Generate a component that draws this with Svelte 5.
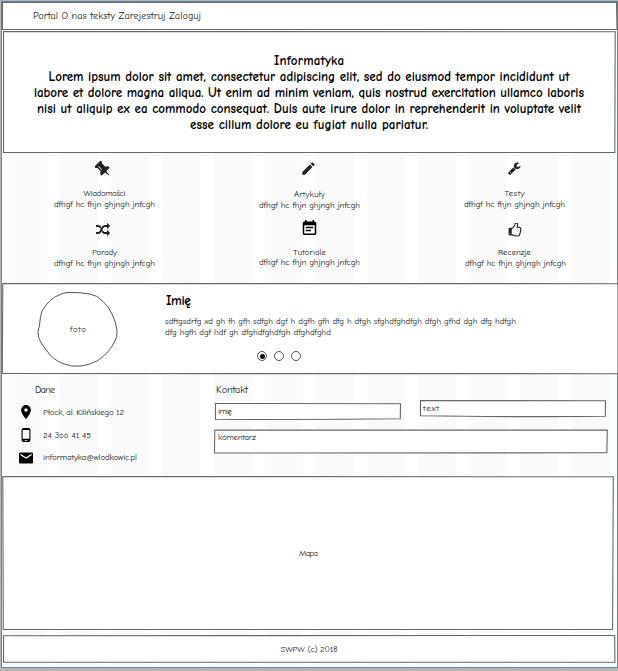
<script>
  // Spreads the letters of a line so that it takes the given width.
  function fit(node, width) {
    const natural = node.getBoundingClientRect().width;
    const gap = (width - natural) / Math.max(1, node.textContent.length - 1);
    node.style.letterSpacing = `${gap}px`;
    node.style.marginRight = `${-gap}px`;
  }

  const heroLines = [
    ['Informatyka', 70],
    ['Lorem ipsum dolor sit amet, consectetur adipiscing elit, sed do eiusmod tempor incididunt ut', 521],
    ['labore et dolore magna aliqua. Ut enim ad minim veniam, quis nostrud exercitation ullamco laboris', 550],
    ['nisi ut aliquip ex ea commodo consequat. Duis aute irure dolor in reprehenderit in voluptate velit', 544],
    ['esse cillum dolore eu fugiat nulla pariatur.', 238]
  ];

  const blurb = 'dfhgf hc fhjn ghjngh jnfcgh';
  const services = [
    { icon: 'pin', title: 'Wiadomości', w: 42, cls: 'a' },
    { icon: 'pencil', title: 'Artykuły', w: 31, cls: 'b' },
    { icon: 'wrench', title: 'Testy', w: 20, cls: 'c' },
    { icon: 'random', title: 'Porady', w: 25, cls: 'd' },
    { icon: 'event', title: 'Tutoriale', w: 33, cls: 'e' },
    { icon: 'thumb', title: 'Recenzje', w: 33, cls: 'f' }
  ];

  const contacts = [
    { icon: 'place', text: 'Płock, al. Kilińskiego 12', w: 81 },
    { icon: 'phone', text: '24 366 41 45', w: 48 },
    { icon: 'mail', text: 'informatyka@wlodkowic.pl', w: 94 }
  ];

  const icons = {
    pin: { box: '0 0 1792 1792', turn: 'rotate(-45 896 896)', d: 'M800 864v-448q0-14-9-23t-23-9-23 9-9 23v448q0 14 9 23t23 9 23-9 9-23zm672 352q0 26-19 45t-45 19h-429l-51 483q-2 12-10.500 20.500t-20.500 8.500h-1q-27 0-32-27l-76-485h-404q-26 0-45-19t-19-45q0-123 78.500-221.500t177.500-98.500v-512q-52 0-90-38t-38-90 38-90 90-38h640q52 0 90 38t38 90-38 90-90 38v512q99 0 177.500 98.500t78.500 221.500z' },
    pencil: { box: '2.500 2.500 19 19', d: 'M3 17.250V21h3.750L17.810 9.940l-3.750-3.750L3 17.250zM20.710 7.040a1 1 0 0 0 0-1.410l-2.340-2.340a1 1 0 0 0-1.410 0l-1.830 1.830 3.750 3.750 1.830-1.830z' },
    wrench: { box: '64 64 1728 1728', d: 'M448 1472q0-26-19-45t-45-19-45 19-19 45 19 45 45 19 45-19 19-45zm644-420l-682 682q-37 37-90 37-52 0-91-37l-106-108q-38-36-38-90 0-53 38-91l681-681q39 98 114.500 173.500t173.500 114.500zm634-435q0 39-23 106-47 134-164.500 217.500t-258.500 83.500q-185 0-316.500-131.500t-131.500-316.500 131.500-316.500 316.500-131.500q58 0 121.500 16.500t107.500 46.500q16 11 16 28t-16 28l-293 169v224l193 107q5-3 79-48.500t135.500-81 70.500-35.500q15 0 23.500 10t8.500 25z' },
    random: { box: '0 0 1792 1792', d: 'M666 481q-60 92-137 273-22-45-37-72.500t-40.500-63.500-51-56.500-63-35-81.500-14.500h-224q-14 0-23-9t-9-23v-192q0-14 9-23t23-9h224q250 0 410 225zm1126 799q0 14-9 23l-320 320q-9 9-23 9-13 0-22.500-9.500t-9.500-22.500v-192q-32 0-85 .5t-81 1-73-1-71-5-64-10.500-63-18.500-58-28.500-59-40-55-53.500-56-69.500q59-93 136-273 22 45 37 72.500t40.500 63.500 51 56.500 63 35 81.500 14.500h256v-192q0-14 9-23t23-9q12 0 24 10l319 319q9 9 9 23zm0-896q0 14-9 23l-320 320q-9 9-23 9-13 0-22.500-9.500t-9.500-22.500v-192h-256q-48 0-87 15t-69 45-51 61.500-45 77.500q-32 62-78 171-29 66-49.500 111t-54 105-64 100-74 83-90 68.500-106.500 42-128 16.500h-224q-14 0-23-9t-9-23v-192q0-14 9-23t23-9h224q48 0 87-15t69-45 51-61.500 45-77.500q32-62 78-171 29-66 49.500-111t54-105 64-100 74-83 90-68.500 106.500-42 128-16.500h256v-192q0-14 9-23t23-9q12 0 24 10l319 319q9 9 9 23z' },
    event: { box: '2 1 20 20', d: 'M17 10H7v2h10v-2zm2-7h-1V1h-2v2H8V1H6v2H5a2 2 0 0 0-2 2v14a2 2 0 0 0 2 2h14a2 2 0 0 0 2-2V5a2 2 0 0 0-2-2zm0 16H5V8h14v11zm-5-5H7v2h7v-2z' },
    thumb: { box: '64 64 1664 1664', d: 'M384 1344q0-26-19-45t-45-19-45 19-19 45 19 45 45 19 45-19 19-45zm1152-576q0-51-39-89.500t-89-38.500h-352q0-58 48-159.500t48-160.500q0-98-32-145t-128-47q-26 26-38 85t-30.500 125.500-59.500 109.500q-22 23-77 91-4 5-23 30t-31.500 41-34.500 42.500-40 44-38.500 35.500-40 27-35.500 9h-32v640h32q13 0 31.500 3t33 6.500 38 11 35 11.500 35.500 12.500 29 10.500q211 73 342 73h121q192 0 192-167 0-26-5-56 30-16 47.500-52.500t17.500-73.500-18-69q53-50 53-119 0-25-10-55.500t-25-47.500q32-1 53.500-47t21.500-81zm128-1q0 89-49 163 9 33 9 69 0 77-38 144 3 21 3 43 0 101-60 178 1 139-85 219.500t-227 80.500h-129q-96 0-189.500-22.500t-216.500-65.500q-116-40-138-40h-288q-53 0-90.500-37.500t-37.500-90.500v-640q0-53 37.500-90.500t90.500-37.500h274q36-24 137-155 58-75 107-128 24-25 35.500-85.500t30.500-126.500 62-108q39-37 90-37 84 0 151 32.500t102 101.500 35 186q0 93-48 192h176q104 0 180 76t76 179z' },
    place: { box: '2 2 20 20', d: 'M12 2a7 7 0 0 0-7 7c0 5.250 7 13 7 13s7-7.750 7-13a7 7 0 0 0-7-7zm0 9.500a2.500 2.500 0 1 1 0-5 2.500 2.500 0 0 1 0 5z' },
    phone: { box: '1 1 22 22', d: 'M16 1H8a3 3 0 0 0-3 3v16a3 3 0 0 0 3 3h8a3 3 0 0 0 3-3V4a3 3 0 0 0-3-3zm-2 20h-4v-1h4v1zm3.250-3H6.750V4h10.500v14z' },
    mail: { box: '2 2 20 20', d: 'M20 4H4a2 2 0 0 0-2 2v12a2 2 0 0 0 2 2h16a2 2 0 0 0 2-2V6a2 2 0 0 0-2-2zm0 4l-8 5-8-5V6l8 5 8-5v2z' }
  };
</script>

{#snippet line(text, width)}<span class="line" use:fit={width}>{text}</span>{/snippet}

{#snippet icon(name)}
  <svg class="icon {name}" viewBox={icons[name].box} aria-hidden="true">
    <path d={icons[name].d} transform={icons[name].turn} fill="currentColor" />
  </svg>
{/snippet}

{#snippet outline(d)}
  <svg class="outline" aria-hidden="true"><path {d} /></svg>
{/snippet}

<div class="desk">
  <div class="page">
    <nav class="top">
      {@render outline('M.5 .5L614.500 .5L615 27.500L.5 27.500Z')}
      {@render line('Portal O nas teksty Zarejestruj Zaloguj', 168)}
    </nav>

    <header class="hero">
      {@render outline('M1.500 .5L613.200 .8L612.800 121.500L1.500 121.500Z')}
      {#each heroLines as [text, width]}
        <div>{@render line(text, width)}</div>
      {/each}
    </header>

    <section class="services">
      {#each services as s}
        <article class={s.cls}>
          <div class="slot">{@render icon(s.icon)}</div>
          <div class="name">{@render line(s.title, s.w)}</div>
          <div class="blurb">{@render line(blurb, 101)}</div>
        </article>
      {/each}
    </section>

    <section class="profile">
      {@render outline('M.8 .5L616 .7L616 90.700L.3 90.500Z')}
      <div class="photo">
        <svg viewBox="0 0 82 76" aria-hidden="true">
          <path d="M31 1.500Q42 1 53 3Q60 4 66 10.500Q72 16 75 23Q79 31 80 39Q81 46 77 52Q71 63 60 70Q52 74 44 75Q34 76 27 73Q16 69 10 60Q3 51 1.500 46Q0 41 2.500 34Q3 26 5 20Q13 7 22 4Q27 1.500 31 1.500Z" />
        </svg>
        <span class="caption">{@render line('foto', 16)}</span>
      </div>
      <div class="bio">
        <h2>{@render line('Imię', 25)}</h2>
        <p>{@render line('sdftgsdrfg xd gh fh gfh sdfgh dgf h dgfh gfh dfg h dfgh sfghdfghdfgh dfgh gfhd dgh dfg hdfgh', 351)}</p>
        <p>{@render line('dfg hgfh dgf hdf gh dfghdfghdfgh dfghdfghd', 166)}</p>
        <div class="radios"><i class="on"></i><i></i><i></i></div>
      </div>
    </section>

    <section class="contact">
      <div class="data">
        <h3>{@render line('Dane', 20)}</h3>
        {#each contacts as c}
          <div class="row">{@render icon(c.icon)}{@render line(c.text, c.w)}</div>
        {/each}
      </div>
      <div class="form">
        <h3>{@render line('Kontakt', 32)}</h3>
        <div class="fields">
          <div class="field first">
            {@render outline('M.5 .5L185.500 .8L185.300 15.800Q93 17 .5 16.200Z')}
            {@render line('imię', 14)}
          </div>
          <div class="field second">
            {@render outline('M.5 .5L185.500 .7L185.300 16.200Q80 17.200 .5 15.700Z')}
            {@render line('text', 16)}
          </div>
        </div>
        <div class="area">
          {@render outline('M.8 .1L393.300 .1L392.900 22.800L.5 23Z')}
          {@render line('komentarz', 38)}
        </div>
      </div>
    </section>

    <section class="map">
      {@render outline('M.8 .5L611.300 .8L610.600 153.500L1.300 153.500Z')}
      {@render line('Mapa', 19)}
    </section>

    <footer>
      {@render outline('M1.500 .7L612.700 .5L612.900 27.200L1.500 27.300Z')}
      {@render line('SWPW (c) 2018', 57)}
    </footer>
  </div>
</div>

<style>
  :global(body) { margin: 0; }
  .desk {
    width: 618px; height: 671px; box-sizing: border-box; overflow: hidden;
    padding: 1px 0 3px 1px; background: #b5b5b5;
    font-family: "Comic Sans MS", "Comic Neue", "Open Sans", sans-serif;
    font-size: 8.800px; color: #222;
  }
  .page {
    width: 617px; height: 667px; box-sizing: border-box;
    border: 1px solid #6588a9;
    background: repeating-linear-gradient(90deg, #fafafa 0 38px, #fff 38px 51.150px) 7px 0 / 601px 100% no-repeat #fff;
    display: flex; flex-direction: column;
  }
  .line { display: inline-block; white-space: pre; }
  .outline { position: absolute; inset: 0; width: 100%; height: 100%; overflow: visible; }
  .outline path { fill: #fff; stroke: #686868; stroke-width: 1.100; }
  .outline ~ * { position: relative; }
  .icon { display: block; flex: none; }

  .top { position: relative; height: 28px; padding-left: 31px; line-height: 28px; font-size: 10.200px; }
  .hero {
    position: relative; height: 122px; margin-top: 1px; box-sizing: border-box;
    padding: 22px 1px 0 0; text-align: center;
    font-size: 13px; font-weight: 700; line-height: 16px; color: #000;
  }

  .services {
    height: 130px; padding-right: 1px; box-sizing: border-box;
    display: grid; grid-template-columns: repeat(3, 205px); grid-template-rows: 60px 1fr;
    text-align: center; line-height: 11px;
  }
  .slot { display: flex; justify-content: center; align-items: center; height: 31px; padding-bottom: 4px; }
  .services .icon { width: 14px; height: 14px; color: #222; }
  .services .pin { width: 18px; height: 18px; }
  .services .pencil { width: 13px; height: 13px; }
  .services .event { color: #000; width: 15px; height: 15px; }
  .services .wrench { width: 13px; height: 13px; }
  .a .slot, .d .slot { padding-right: 4px; }
  .b { padding-top: 1px; }
  .b .slot { height: 29px; padding-bottom: 6px; padding-right: 3px; }
  .d .slot { height: 33px; padding-bottom: 1px; }
  .e .slot { height: 29px; padding-bottom: 5px; padding-right: 1px; }
  .f .slot { height: 34px; padding-bottom: 0; padding-left: 1px; }
  .d .blurb { padding-left: 0; }
  .f .blurb { padding-left: 2px; }
  .e .blurb { margin-top: -1px; }

  .profile { position: relative; height: 91px; display: flex; }
  .photo { width: 82px; height: 76px; margin: 8px 0 0 35px; display: grid; place-items: center; }
  .photo svg { grid-area: 1 / 1; width: 82px; height: 76px; fill: #fff; stroke: #555; stroke-width: 1; }
  .caption { grid-area: 1 / 1; }
  .bio { margin-left: 46px; flex: 1; }
  h2 { margin: 10px 0 7px 1px; font-size: 13.500px; line-height: 16px; color: #000; }
  p { margin: 0; line-height: 11px; }
  .radios { display: flex; gap: 7.200px; margin: 13px 0 0 92px; }
  i { width: 8px; height: 8px; border: 1px solid #555; border-radius: 50%; display: grid; place-items: center; }
  .on::after { content: ""; width: 5px; height: 5px; border-radius: 50%; background: #000; }

  .contact { height: 102px; display: flex; }
  h3 { margin: 0; font-size: 10.200px; font-weight: 400; line-height: 14px; }
  .data { width: 211px; padding-top: 9px; box-sizing: border-box; }
  .data h3 { padding-left: 33px; margin-bottom: 4px; }
  .row { display: flex; align-items: center; gap: 10px; height: 22.700px; padding-left: 17px; line-height: 11px; }
  .row .icon { width: 14px; height: 14px; color: #000; }
  .form { padding-top: 9px; }
  .form h3 { padding-left: 3px; }
  .fields { display: flex; padding-left: 2px; gap: 19px; height: 33px; }
  .field { position: relative; width: 186px; height: 17px; line-height: 17px; padding-left: 3px; box-sizing: border-box; }
  .first { margin-top: 6px; }
  .second { margin-top: 3px; line-height: 16px; }
  .area { position: relative; width: 394px; height: 24px; margin-left: 1px; padding-left: 4px; box-sizing: border-box; line-height: 15px; }

  .map { position: relative; height: 154px; line-height: 155px; text-align: center; padding-right: 2px; }
  footer { position: relative; height: 28px; margin-top: 5px; line-height: 28px; text-align: center; padding-right: 1px; }
</style>
